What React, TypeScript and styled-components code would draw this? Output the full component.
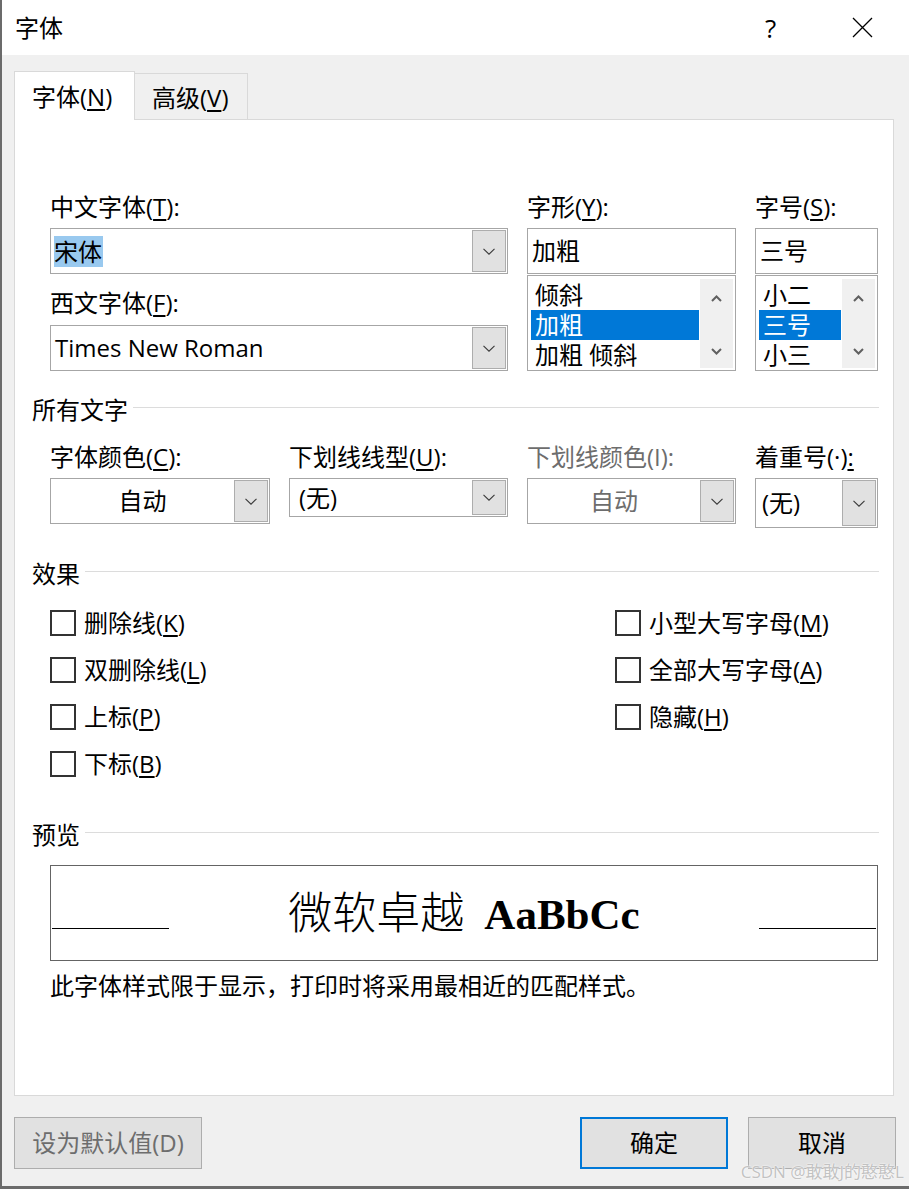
import React from 'react';
import styled, { createGlobalStyle } from 'styled-components';

const UI_FONT = `"Open Sans", "Noto Sans CJK SC", sans-serif`;

const GlobalStyle = createGlobalStyle`
  html, body { margin: 0; padding: 0; background: #f0f0f0; }
  body { font-family: ${UI_FONT}; }
  * { box-sizing: border-box; }
  u { text-decoration-thickness: 1.5px; text-underline-offset: 3px; }
`;

const Window = styled.div`
  position: relative;
  width: 909px;
  height: 1189px;
  background: #f0f0f0;
  border-left: 2px solid #6b6b6b;
  border-bottom: 3px solid #6b6b6b;
  display: flex;
  flex-direction: column;
  font-family: ${UI_FONT};
  font-size: 24px;
  color: #000;
  overflow: hidden;
`;

const TitleBar = styled.div`
  height: 55px;
  flex: none;
  background: #fff;
  display: flex;
  align-items: center;
  padding: 0 36px 0 13px;
`;

const Title = styled.div`
  font-size: 24px;
  line-height: 30px;
`;

const Help = styled.div`
  margin-left: auto;
  width: 14px;
  margin-right: 73px;
  font-size: 26px;
  line-height: 30px;
  font-weight: 400;
`;

const CloseIcon = styled.svg`
  width: 21px;
  height: 21px;
  display: block;
`;

const Body = styled.div`
  flex: 1;
  display: flex;
  flex-direction: column;
  padding: 16px 15px 0 12px;
`;

const TabRow = styled.div`
  display: flex;
  align-items: flex-end;
  height: 48px;
`;

const Tab = styled.div<{ $active?: boolean }>`
  position: relative;
  z-index: ${p => (p.$active ? 1 : 0)};
  height: ${p => (p.$active ? '49px' : '46px')};
  width: ${p => (p.$active ? '121px' : '113px')};
  margin-bottom: ${p => (p.$active ? '-1px' : '0')};
  background: ${p => (p.$active ? '#fff' : '#f0f0f0')};
  border: 1px solid #d9d9d9;
  border-bottom: none;
  border-left: ${p => (p.$active ? '1px solid #d9d9d9' : 'none')};
  display: flex;
  align-items: center;
  padding: 2px 0 0 17px;
  line-height: 30px;
  white-space: nowrap;
`;

const Panel = styled.div`
  height: 977px;
  flex: none;
  background: #fff;
  border: 1px solid #d9d9d9;
  padding: 0 14px 0 17px;
  display: flex;
  flex-direction: column;
`;

const FontGrid = styled.div`
  margin-top: 72px;
  padding-left: 18px;
  display: grid;
  grid-template-columns: 458px 209px 123px;
  column-gap: 19px;
  align-items: start;
`;

const AllTextGrid = styled.div`
  margin-top: 17px;
  padding-left: 18px;
  display: grid;
  grid-template-columns: 220px 219px 209px 123px;
  column-gap: 19px;
  align-items: start;
`;

const Column = styled.div`
  display: flex;
  flex-direction: column;
`;

const FieldLabel = styled.div<{ $disabled?: boolean; $gap?: number }>`
  height: 30px;
  line-height: 30px;
  white-space: nowrap;
  margin-top: ${p => p.$gap ?? 0}px;
  color: ${p => (p.$disabled ? '#6d6d6d' : '#000')};
`;

const Combo = styled.div<{ $h: number; $gap?: number }>`
  height: ${p => p.$h}px;
  margin-top: ${p => p.$gap ?? 6}px;
  border: 1px solid #a6a6a6;
  background: #fff;
  display: flex;
  align-items: stretch;
`;

const ComboText = styled.div<{ $pad?: number; $center?: boolean; $disabled?: boolean }>`
  flex: 1;
  display: flex;
  align-items: center;
  justify-content: ${p => (p.$center ? 'center' : 'flex-start')};
  padding-left: ${p => p.$pad ?? 4}px;
  line-height: 30px;
  white-space: nowrap;
  color: ${p => (p.$disabled ? '#6d6d6d' : '#000')};
`;

const Highlight = styled.span`
  background: #99c9ef;
  line-height: 31px;
  padding-right: 1px;
`;

const DropButton = styled.div`
  width: 34px;
  flex: none;
  margin: 1px 1px 1px 0;
  background: #e1e1e1;
  border: 1px solid #adadad;
  display: flex;
  align-items: center;
  justify-content: center;
`;

const Chevron = styled.svg`
  width: 12px;
  height: 7px;
  display: block;
`;

const TextBox = styled.div`
  height: 46px;
  margin-top: 6px;
  border: 1px solid #a6a6a6;
  background: #fff;
  display: flex;
  align-items: center;
  padding-left: 4px;
  line-height: 30px;
  white-space: nowrap;
`;

const ListBox = styled.div`
  height: 96px;
  margin-top: 1px;
  border: 1px solid #a6a6a6;
  background: #fff;
  display: flex;
  gap: 1px;
  padding: 0 2px 0 3px;
`;

const ListItems = styled.div`
  flex: 1;
  min-width: 0;
  padding-top: 4px;
  overflow: hidden;
  display: flex;
  flex-direction: column;
`;

const ListItem = styled.div<{ $selected?: boolean }>`
  height: 30px;
  flex: none;
  line-height: 30px;
  padding-left: 4px;
  white-space: nowrap;
  background: ${p => (p.$selected ? '#0078d7' : 'transparent')};
  color: ${p => (p.$selected ? '#fff' : '#000')};
`;

const ScrollBar = styled.div`
  width: 33px;
  flex: none;
  margin: 3px 0 2px;
  background: #f0f0f0;
  display: flex;
  flex-direction: column;
  justify-content: space-between;
  align-items: center;
  padding: 16px 0 13px;
`;

const ArrowIcon = styled.svg`
  width: 11px;
  height: 7px;
  display: block;
`;

const SectionHeader = styled.div<{ $gap: number }>`
  margin-top: ${p => p.$gap}px;
  height: 30px;
  line-height: 30px;
  display: flex;
  align-items: center;
  white-space: nowrap;
`;

const HeaderLine = styled.div`
  flex: 1;
  height: 1px;
  background: #dcdcdc;
  margin-left: 5px;
  margin-top: -6px;
`;

const CheckColumns = styled.div`
  margin-top: 19px;
  padding-left: 18px;
  display: flex;
`;

const CheckColumn = styled.div<{ $w?: number }>`
  display: flex;
  flex-direction: column;
  gap: 17px;
  width: ${p => (p.$w ? `${p.$w}px` : 'auto')};
`;

const CheckRow = styled.div`
  height: 30px;
  line-height: 30px;
  display: flex;
  align-items: center;
  gap: 8px;
  white-space: nowrap;
`;

const CheckBox = styled.div`
  width: 26px;
  height: 26px;
  flex: none;
  border: 2px solid #333;
  background: #fff;
`;

const PreviewBox = styled.div`
  margin: 15px 0 0 18px;
  width: 828px;
  height: 96px;
  border: 1px solid #646464;
  background: #fff;
  display: flex;
  align-items: baseline;
  padding: 0 1px;
`;

const BaseLine = styled.div`
  width: 117px;
  height: 1px;
  flex: none;
  background: #000;
`;

const PreviewText = styled.div`
  flex: 1;
  text-align: center;
  padding-top: 22px;
  font-family: "Liberation Serif", "Times New Roman", serif;
  font-size: 44px;
  line-height: 44px;
  white-space: nowrap;
`;

const PreviewCJK = styled.span`
  font-family: "Noto Sans CJK SC", sans-serif;
  font-weight: 300;
  margin-right: 20px;
`;

const PreviewLatin = styled.span`
  font-weight: 700;
  font-size: 43px;
`;

const Note = styled.div`
  margin-top: 10px;
  padding-left: 18px;
  line-height: 30px;
  white-space: nowrap;
`;

const ButtonRow = styled.div`
  margin-top: 21px;
  margin-right: -2px;
  height: 52px;
  display: flex;
  gap: 20px;
`;

const Button = styled.div<{ $w: number; $primary?: boolean; $disabled?: boolean }>`
  width: ${p => p.$w}px;
  height: 52px;
  background: #e1e1e1;
  border: ${p => (p.$primary ? '2px solid #0078d7' : '1px solid #adadad')};
  color: ${p => (p.$disabled ? '#6d6d6d' : '#000')};
  display: flex;
  align-items: center;
  justify-content: center;
  line-height: 30px;
  white-space: nowrap;
`;

const Spacer = styled.div`
  flex: 1;
`;

const Watermark = styled.div`
  position: absolute;
  right: 5px;
  bottom: 4px;
  font-size: 17px;
  line-height: 20px;
  color: #c2c2c2;
  text-shadow: 0 0 2px #fff, 0 0 1px #fff;
  white-space: nowrap;
`;

const DropChevron = () => (
  <Chevron viewBox="0 0 12 7">
    <path d="M0.5 0.8 L6 6.2 L11.5 0.8" fill="none" stroke="#3a3a3a" strokeWidth="1.1" />
  </Chevron>
);

const DropDown = () => (
  <DropButton>
    <DropChevron />
  </DropButton>
);

const Scroll = () => (
  <ScrollBar>
    <ArrowIcon viewBox="0 0 11 7">
      <path d="M1 6 L5.5 1.5 L10 6" fill="none" stroke="#606060" strokeWidth="2" />
    </ArrowIcon>
    <ArrowIcon viewBox="0 0 11 7">
      <path d="M1 1 L5.5 5.5 L10 1" fill="none" stroke="#606060" strokeWidth="2" />
    </ArrowIcon>
  </ScrollBar>
);

const leftEffects: [string, string][] = [
  ['删除线', 'K'],
  ['双删除线', 'L'],
  ['上标', 'P'],
  ['下标', 'B'],
];

const rightEffects: [string, string][] = [
  ['小型大写字母', 'M'],
  ['全部大写字母', 'A'],
  ['隐藏', 'H'],
];

const Check = ({ label, k }: { label: string; k: string }) => (
  <CheckRow>
    <CheckBox />
    <span>
      {label}(<u>{k}</u>)
    </span>
  </CheckRow>
);

export default function App() {
  return (
    <>
      <GlobalStyle />
      <Window>
        <TitleBar>
          <Title>字体</Title>
          <Help>?</Help>
          <CloseIcon viewBox="0 0 21 21">
            <path d="M1 1 L20 20 M20 1 L1 20" stroke="#000" strokeWidth="1.3" fill="none" />
          </CloseIcon>
        </TitleBar>
        <Body>
          <TabRow>
            <Tab $active>
              字体(<u>N</u>)
            </Tab>
            <Tab>
              高级(<u>V</u>)
            </Tab>
          </TabRow>
          <Panel>
            <FontGrid>
              <Column>
                <FieldLabel>
                  中文字体(<u>T</u>):
                </FieldLabel>
                <Combo $h={46}>
                  <ComboText $pad={3}>
                    <Highlight>宋体</Highlight>
                  </ComboText>
                  <DropDown />
                </Combo>
                <FieldLabel $gap={14}>
                  西文字体(<u>F</u>):
                </FieldLabel>
                <Combo $h={46} $gap={7}>
                  <ComboText $pad={4}>Times New Roman</ComboText>
                  <DropDown />
                </Combo>
              </Column>
              <Column>
                <FieldLabel>
                  字形(<u>Y</u>):
                </FieldLabel>
                <TextBox>加粗</TextBox>
                <ListBox>
                  <ListItems>
                    <ListItem>倾斜</ListItem>
                    <ListItem $selected>加粗</ListItem>
                    <ListItem>加粗 倾斜</ListItem>
                  </ListItems>
                  <Scroll />
                </ListBox>
              </Column>
              <Column>
                <FieldLabel>
                  字号(<u>S</u>):
                </FieldLabel>
                <TextBox>三号</TextBox>
                <ListBox>
                  <ListItems>
                    <ListItem>小二</ListItem>
                    <ListItem $selected>三号</ListItem>
                    <ListItem>小三</ListItem>
                  </ListItems>
                  <Scroll />
                </ListBox>
              </Column>
            </FontGrid>

            <SectionHeader $gap={24}>
              所有文字
              <HeaderLine />
            </SectionHeader>
            <AllTextGrid>
              <Column>
                <FieldLabel>
                  字体颜色(<u>C</u>):
                </FieldLabel>
                <Combo $h={46}>
                  <ComboText $center $pad={0}>自动</ComboText>
                  <DropDown />
                </Combo>
              </Column>
              <Column>
                <FieldLabel>
                  下划线线型(<u>U</u>):
                </FieldLabel>
                <Combo $h={39}>
                  <ComboText $pad={9}>(无)</ComboText>
                  <DropDown />
                </Combo>
              </Column>
              <Column>
                <FieldLabel $disabled>下划线颜色(I):</FieldLabel>
                <Combo $h={46}>
                  <ComboText $center $pad={0} $disabled>
                    自动
                  </ComboText>
                  <DropDown />
                </Combo>
              </Column>
              <Column>
                <FieldLabel>
                  着重号(·)<u>:</u>
                </FieldLabel>
                <Combo $h={50}>
                  <ComboText $pad={6}>(无)</ComboText>
                  <DropDown />
                </Combo>
              </Column>
            </AllTextGrid>

            <SectionHeader $gap={31}>
              效果
              <HeaderLine />
            </SectionHeader>
            <CheckColumns>
              <CheckColumn $w={565}>
                {leftEffects.map(([l, k]) => (
                  <Check key={l} label={l} k={k} />
                ))}
              </CheckColumn>
              <CheckColumn>
                {rightEffects.map(([l, k]) => (
                  <Check key={l} label={l} k={k} />
                ))}
              </CheckColumn>
            </CheckColumns>

            <SectionHeader $gap={41}>
              预览
              <HeaderLine />
            </SectionHeader>
            <PreviewBox>
              <BaseLine />
              <PreviewText>
                <PreviewCJK>微软卓越</PreviewCJK>
                <PreviewLatin>AaBbCc</PreviewLatin>
              </PreviewText>
              <BaseLine />
            </PreviewBox>
            <Note>此字体样式限于显示，打印时将采用最相近的匹配样式。</Note>
          </Panel>
          <ButtonRow>
            <Button $w={188} $disabled>
              设为默认值(D)
            </Button>
            <Spacer />
            <Button $w={148} $primary>
              确定
            </Button>
            <Button $w={148}>取消</Button>
          </ButtonRow>
        </Body>
        <Watermark>CSDN @敢敢J的憨憨L</Watermark>
      </Window>
    </>
  );
}
